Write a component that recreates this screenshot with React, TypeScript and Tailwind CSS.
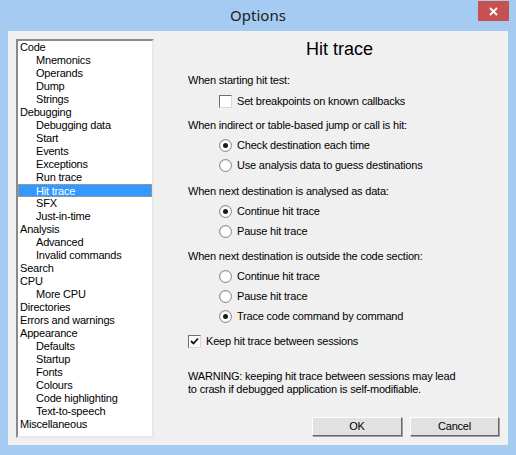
const tree: [string, number][] = [
  ['Code', 0],
  ['Mnemonics', 1],
  ['Operands', 1],
  ['Dump', 1],
  ['Strings', 1],
  ['Debugging', 0],
  ['Debugging data', 1],
  ['Start', 1],
  ['Events', 1],
  ['Exceptions', 1],
  ['Run trace', 1],
  ['Hit trace', 1],
  ['SFX', 1],
  ['Just-in-time', 1],
  ['Analysis', 0],
  ['Advanced', 1],
  ['Invalid commands', 1],
  ['Search', 0],
  ['CPU', 0],
  ['More CPU', 1],
  ['Directories', 0],
  ['Errors and warnings', 0],
  ['Appearance', 0],
  ['Defaults', 1],
  ['Startup', 1],
  ['Fonts', 1],
  ['Colours', 1],
  ['Code highlighting', 1],
  ['Text-to-speech', 1],
  ['Miscellaneous', 0],
];

function Radio({ checked }: { checked?: boolean }) {
  return (
    <span className="w-[13px] h-[13px] rounded-full border border-[#8a8a8a] bg-gradient-to-br from-[#dcdcdc] to-white flex items-center justify-center shrink-0">
      <span className="w-[9px] h-[9px] rounded-full bg-white flex items-center justify-center">
        {checked && <span className="w-[5px] h-[5px] rounded-full bg-[#1a1a1a]" />}
      </span>
    </span>
  );
}

function Check({ checked }: { checked?: boolean }) {
  return (
    <span className="w-[13px] h-[13px] border border-t-[#6e6e6e] border-l-[#6e6e6e] border-b-[#d8d8d8] border-r-[#d8d8d8] bg-white flex items-center justify-center shrink-0">
      {checked && (
        <svg width="9" height="9" viewBox="0 0 9 9">
          <path d="M1 4 L3.5 6.5 L8 1.5" stroke="#111" strokeWidth="1.8" fill="none" />
        </svg>
      )}
    </span>
  );
}

function Option({ children, checked, box }: { children: string; checked?: boolean; box?: boolean }) {
  return (
    <div className="h-[20px] flex items-center gap-[5px] pl-[31px]">
      {box ? <Check checked={checked} /> : <Radio checked={checked} />}
      <span>{children}</span>
    </div>
  );
}

function Label({ children, className = '' }: { children: string; className?: string }) {
  return <div className={`h-[20px] flex items-center ${className}`}>{children}</div>;
}

function Button({ children, className = '' }: { children: string; className?: string }) {
  return (
    <button className={`h-[19px] bg-[#e1e1e1] border border-t-white border-l-white border-b-[#696969] border-r-[#696969] shadow-[1px_1px_0_#a0a0a0] flex items-center justify-center ${className}`}>
      {children}
    </button>
  );
}

export default function App() {
  return (
    <div
      className="w-[516px] h-[455px] bg-[#a5cbf2] flex flex-col text-[11px] tracking-[-0.2px] text-black"
      style={{ fontFamily: '"Liberation Sans", Arial, sans-serif' }}
    >
      {/* Title bar */}
      <div className="h-[31px] relative flex items-center justify-center shrink-0">
        <span className="text-[15px] tracking-normal text-[#1c1c1c]" style={{ fontFamily: '"Noto Sans", "Open Sans", sans-serif' }}>
          Options
        </span>
        <div className="absolute right-[7px] top-[1px] w-[31px] h-[20px] bg-[#c75050] flex items-center justify-center">
          <svg width="9" height="9" viewBox="0 0 9 9">
            <path d="M1 1 L8 8 M8 1 L1 8" stroke="#fff" strokeWidth="1.8" />
          </svg>
        </div>
      </div>

      {/* Body */}
      <div className="mx-[8px] h-[414px] bg-[#f0f0f0] flex">
        {/* Tree */}
        <div className="ml-[8px] mt-[8px] w-[138px] h-[399px] bg-white border-2 border-t-[#8a8a8a] border-l-[#8a8a8a] border-b-[#e8e8e8] border-r-[#e8e8e8] flex flex-col">
          {tree.map(([name, lvl]) =>
            name === 'Hit trace' ? (
              <div key={name} className="h-[13px] leading-[13px] bg-[#3399ff] text-white border border-dotted border-[#e8974a] pl-[17px]">
                {name}
              </div>
            ) : (
              <div key={name} className={`h-[13px] leading-[13px] ${lvl ? 'pl-[18px]' : 'pl-[2px]'}`}>
                {name}
              </div>
            )
          )}
        </div>

        {/* Page */}
        <div className="flex-1 flex flex-col pl-[34px] pr-[9px] pt-[6px]">
          <div className="h-[24px] flex items-center justify-center text-[18px] tracking-normal pr-[8px]">Hit trace</div>
          <Label className="mt-[9px]">When starting hit test:</Label>
          <div className="mt-[1px]">
            <Option box>Set breakpoints on known callbacks</Option>
          </div>
          <Label className="mt-[4px]">When indirect or table-based jump or call is hit:</Label>
          <Option checked>Check destination each time</Option>
          <Option>Use analysis data to guess destinations</Option>
          <Label className="mt-[6px]">When next destination is analysed as data:</Label>
          <Option checked>Continue hit trace</Option>
          <Option>Pause hit trace</Option>
          <Label className="mt-[5px]">When next destination is outside the code section:</Label>
          <Option>Continue hit trace</Option>
          <Option>Pause hit trace</Option>
          <Option checked>Trace code command by command</Option>
          <div className="mt-[5px] h-[20px] flex items-center gap-[5px]">
            <Check checked />
            <span>Keep hit trace between sessions</span>
          </div>
          <div className="mt-[19px] leading-[13px]">
            WARNING: keeping hit trace between sessions may lead
            <br />
            to crash if debugged application is self-modifiable.
          </div>
          <div className="mt-[21px] flex justify-end gap-[8px]">
            <Button className="w-[90px]">OK</Button>
            <Button className="w-[89px]">Cancel</Button>
          </div>
        </div>
      </div>
    </div>
  );
}
